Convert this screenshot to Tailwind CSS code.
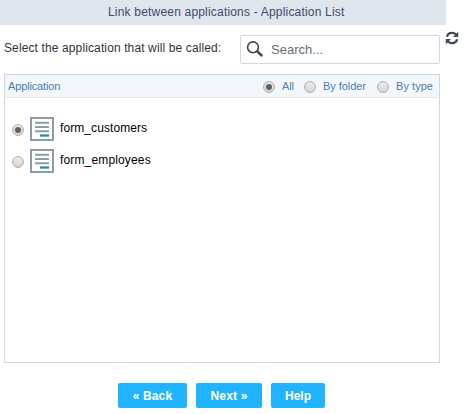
<!DOCTYPE html>
<html lang="en">
<head>
<meta charset="utf-8">
<title>Application List</title>
<script src="https://cdn.jsdelivr.net/npm/@tailwindcss/browser@4"></script>
</head>
<body class="w-[465px] h-[414px] overflow-hidden bg-white font-['Liberation_Sans',Arial,sans-serif] text-[12px] leading-[14px] text-black">
<svg class="absolute w-0 h-0">
  <symbol id="form" viewBox="0 0 24 24">
    <rect x="1" y="1" width="22" height="22" fill="#fff" stroke="#8e9ba8" stroke-width="2"/>
    <path d="M5 5.8h14M5 10h14M5 14.2h14" stroke="#8e9ba8" stroke-width="2.1"/>
    <path d="M10 18.5h9" stroke="#2c87a8" stroke-width="2.3"/>
  </symbol>
  <linearGradient id="g" x1="0" y1="0" x2="0" y2="1"><stop offset="0" stop-color="#eeeeee"/><stop offset="1" stop-color="#d4d4d4"/></linearGradient>
  <symbol id="radio" viewBox="0 0 12 12">
    <circle cx="6" cy="6" r="5.4" fill="url(#g)" stroke="#a9a9a9"/>
  </symbol>
</svg>
<header class="w-[446px] h-[25px] bg-[#dfe6ee] pl-[108px] pt-[5px] text-[#444a66] whitespace-nowrap"><span class="tracking-[0.19px]">Link between applications - Application List</span></header>
<div class="flex h-[49px] pt-[10px] pl-1">
  <label class="w-[236px] pt-[6px] text-[#333] whitespace-nowrap"><span class="tracking-[0.12px]">Select the application that will be called:</span></label>
  <div class="flex w-[200px] h-[29px] border border-[#cdd9e3] rounded-[2px] pl-[5px] pt-[5px]">
    <svg class="w-[18px] h-[18px] mr-[7px]" viewBox="0 0 18 18" fill="none" stroke="#444"><circle cx="7" cy="6.3" r="5.4" stroke-width="1.6"/><path d="M11 10.2l5.2 4.8" stroke-width="2.4"/></svg>
    <span class="text-[13px] leading-[18px] text-[#666e75]">Search...</span>
  </div>
  <svg class="ml-[5px] mt-[-4px] w-[14px] h-[14px]" viewBox="0 0 14 14" fill="none" stroke="#3d4957" stroke-width="2.2"><path d="M2 5.8C2.4 3.4 4.4 1.9 7 1.9c1.8 0 3 .6 4 1.7M12 8.2c-.4 2.4-2.4 3.9-5 3.9-1.8 0-3-.6-4-1.7"/><path d="M13.2 .8v5.2H8zM.8 13.2V8H6z" fill="#3d4957" stroke="none"/></svg>
</div>
<main class="ml-1 w-[436px] h-[289px] border border-[#cbd8e1]">
  <div class="flex h-[23px] bg-[#f3f7fc] border-b border-[#e3e9ee] text-[11px] text-[#4a7dae] pl-[3px] whitespace-nowrap">
    <span class="w-[255px] pt-[4px] tracking-[-0.14px]">Application</span>
    <svg class="w-3 h-3 mt-[6px] mr-[7px]"><use href="#radio"/><circle cx="6" cy="6" r="3" fill="#606060"/></svg>
    <span class="w-[22px] pt-[4px] tracking-[-0.2px]">All</span>
    <svg class="w-3 h-3 mt-[6px] mr-[7px]"><use href="#radio"/></svg>
    <span class="w-[54px] pt-[4px] tracking-[-0.05px]">By folder</span>
    <svg class="w-3 h-3 mt-[6px] mr-[7px]"><use href="#radio"/></svg>
    <span class="pt-[4px] tracking-[0.05px]">By type</span>
  </div>
  <div class="pt-[19px] pl-[7px] flex flex-col gap-2 whitespace-nowrap">
    <div class="flex h-6"><svg class="w-3 h-3 mt-[7px] mr-[6px]"><use href="#radio"/><circle cx="6" cy="6" r="3" fill="#606060"/></svg><svg class="w-6 h-6 mr-[6px]"><use href="#form"/></svg><span class="pt-[4px] tracking-[0.08px]">form_customers</span></div>
    <div class="flex h-6"><svg class="w-3 h-3 mt-[7px] mr-[6px]"><use href="#radio"/></svg><svg class="w-6 h-6 mr-[6px]"><use href="#form"/></svg><span class="pt-[4px] tracking-[0.15px]">form_employees</span></div>
  </div>
</main>
<footer class="flex gap-[9px] pt-[20px] pl-[118px] font-bold text-white whitespace-nowrap">
  <button class="w-[69px] h-[25px] rounded-[2px] bg-[#20b3ff] tracking-[0.12px]">« Back</button>
  <button class="w-[66px] h-[25px] rounded-[2px] bg-[#20b3ff] tracking-[0.2px]">Next »</button>
  <button class="w-[54px] h-[25px] rounded-[2px] bg-[#20b3ff]">Help</button>
</footer>
</body>
</html>
